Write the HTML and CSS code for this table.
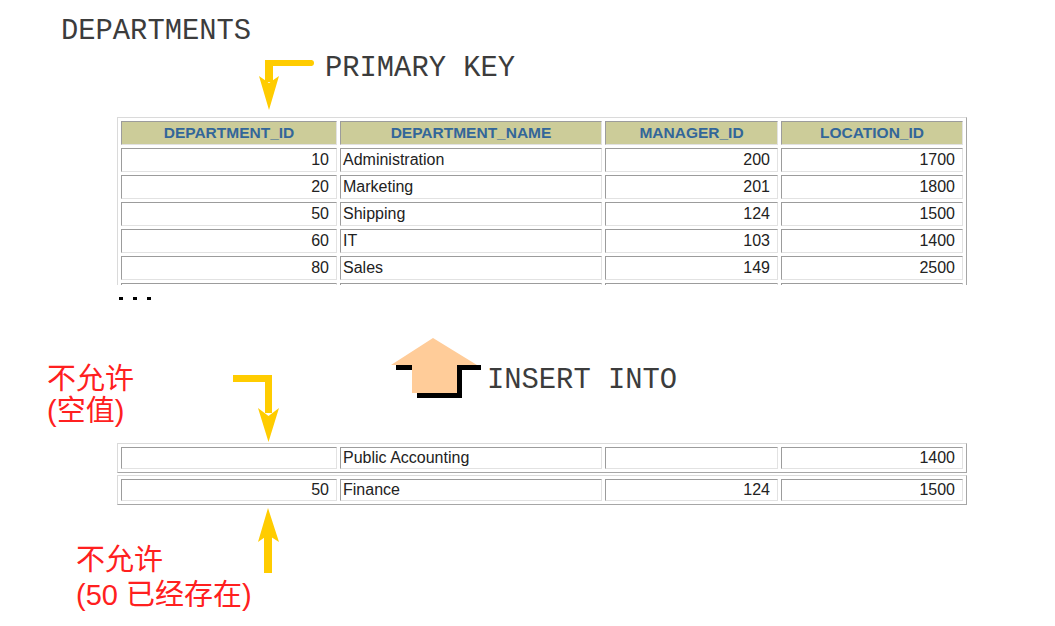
FILE: index.html
```html
<!DOCTYPE html>
<html>
<head>
<meta charset="utf-8">
<link rel="stylesheet" href="styles.css">
</head>
<body>
<div class="slide">
  <div class="title mono">DEPARTMENTS</div>

  <div class="pk">
    <svg class="pk-arrow" width="60" height="52" viewBox="0 0 60 52">
      <rect x="7" y="2" width="47" height="6" fill="#ffcc00"/>
      <circle cx="53" cy="5" r="3" fill="#ffcc00"/>
      <rect x="7" y="2" width="8" height="22" fill="#ffcc00"/>
      <polygon points="1,18 11,25 21,18 11,52" fill="#ffcc00"/>
    </svg>
    <span class="mono pk-label">PRIMARY KEY</span>
  </div>

  <div class="grid-wrap">
    <table class="db">
      <tr>
        <th class="c1">DEPARTMENT_ID</th>
        <th class="c2">DEPARTMENT_NAME</th>
        <th class="c3">MANAGER_ID</th>
        <th class="c4">LOCATION_ID</th>
      </tr>
      <tr><td class="num">10</td><td>Administration</td><td class="num">200</td><td class="num">1700</td></tr>
      <tr><td class="num">20</td><td>Marketing</td><td class="num">201</td><td class="num">1800</td></tr>
      <tr><td class="num">50</td><td>Shipping</td><td class="num">124</td><td class="num">1500</td></tr>
      <tr><td class="num">60</td><td>IT</td><td class="num">103</td><td class="num">1400</td></tr>
      <tr><td class="num">80</td><td>Sales</td><td class="num">149</td><td class="num">2500</td></tr>
      <tr><td></td><td></td><td></td><td></td></tr>
    </table>
  </div>

  <div class="dots"><span></span><span></span><span></span></div>

  <div class="insert">
    <div class="note note-top">不允许<br>(空值)</div>
    <svg class="arrow-down" width="50" height="71" viewBox="0 0 50 71">
      <rect x="3" y="3" width="39" height="7" fill="#ffcc00"/>
      <rect x="35" y="3" width="7" height="38" fill="#ffcc00"/>
      <polygon points="28,36 38.5,44 49,36 38.5,70" fill="#ffcc00"/>
    </svg>
    <svg class="insert-arrow" width="96" height="66" viewBox="0 0 96 66">
      <path d="M8 30 H93 V35 H74 V63 H29 V35 H8 Z" fill="#000"/>
      <polygon points="45,3 89,30 69,30 69,58 24,58 24,30 3,30" fill="#ffcc99"/>
    </svg>
    <span class="mono insert-label">INSERT INTO</span>
  </div>

  <div class="grid2">
    <table class="db short">
      <tr><td class="c1 num"></td><td class="c2">Public Accounting</td><td class="c3 num"></td><td class="c4 num">1400</td></tr>
    </table>
    <table class="db short">
      <tr><td class="c1 num">50</td><td class="c2">Finance</td><td class="c3 num">124</td><td class="c4 num">1500</td></tr>
    </table>
  </div>

  <div class="bottom">
    <div class="note note-bottom">不允许<br>(50 已经存在)</div>
    <svg class="arrow-up" width="26" height="70" viewBox="0 0 26 70">
      <polygon points="12,2 23,36 12,29 2,36" fill="#ffcc00"/>
      <rect x="8" y="29" width="8" height="38" fill="#ffcc00"/>
    </svg>
  </div>
</div>
</body>
</html>
```

FILE: styles.css
```css
* { box-sizing: border-box; }

body {
  margin: 0;
  background: #ffffff;
}

.slide {
  width: 1055px;
  height: 626px;
  overflow: hidden;
  background: #ffffff;
}

.mono {
  font-family: "Liberation Mono", "Courier New", monospace;
  font-size: 28.8px;
  line-height: 32px;
  color: #3c3c3c;
  white-space: nowrap;
}

.title {
  padding: 16px 0 0 61px;
  height: 48px;
}

.pk {
  display: flex;
  align-items: flex-start;
  padding-left: 258px;
  height: 62px;
}

.pk-arrow { margin-top: 10px; flex: none; }

.pk-label { margin: 5px 0 0 7px; }

.grid-wrap {
  margin: 7px 0 0 117px;
  width: 850px;
  height: 168px;
  overflow: hidden;
}

table.db {
  border-collapse: separate;
  border-spacing: 3px;
  table-layout: fixed;
  width: 850px;
  border: 1px solid;
  border-color: #dadada #a6a6a6 #a6a6a6 #dadada;
  font-family: "Liberation Sans", Arial, sans-serif;
}

.db th,
.db td {
  border: 1px solid;
  border-color: #9c9c9c #e2e2e2 #e2e2e2 #9c9c9c;
  height: 24px;
  padding: 0 7px 0 2px;
  vertical-align: middle;
  white-space: nowrap;
  overflow: hidden;
}

.db th {
  background: #cccc99;
  color: #336699;
  font-size: 15.5px;
  font-weight: bold;
  text-align: center;
  padding: 0;
}

.db td {
  font-size: 16px;
  color: #222222;
  text-align: left;
}

.db td.num { text-align: right; }

.db .c1 { width: 216px; }
.db .c2 { width: 262px; }
.db .c3 { width: 173px; }
.db .c4 { width: 182px; }

.db.short td { height: 22px; }

.dots {
  display: flex;
  gap: 10px;
  margin: 12px 0 0 119px;
  height: 3px;
}

.dots span {
  width: 4px;
  height: 3px;
  background: #000000;
}

.insert {
  display: flex;
  align-items: flex-start;
  height: 143px;
}

.note {
  font-family: "Liberation Sans", "Noto Sans CJK SC", sans-serif;
  font-size: 29px;
  color: #ff2020;
  white-space: nowrap;
  flex: none;
}

.note-top {
  margin: 63px 0 0 47px;
  width: 183px;
  line-height: 32px;
}

.arrow-down { margin-top: 72px; flex: none; }

.insert-arrow { margin: 35px 0 0 108px; flex: none; }

.insert-label { margin: 65px 0 0 3px; }

.grid2 {
  display: flex;
  flex-direction: column;
  gap: 2px;
  margin-left: 117px;
  width: 850px;
}

.bottom {
  display: flex;
  align-items: flex-start;
}

.note-bottom {
  margin: 38px 0 0 76px;
  width: 180px;
  line-height: 35px;
}

.arrow-up { margin-top: 1px; flex: none; }
```
